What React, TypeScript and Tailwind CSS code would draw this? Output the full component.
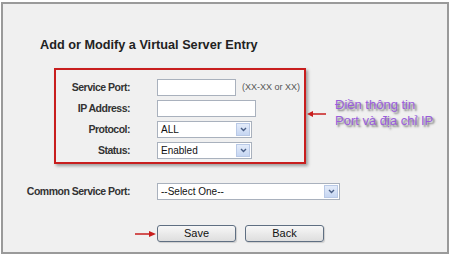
const Chevron = () => (
  <svg width="7" height="5" viewBox="0 0 7 5">
    <path d="M1 1 L3.5 3.5 L6 1" fill="none" stroke="#4a5f86" strokeWidth="1.4" />
  </svg>
)

const Select = ({ value, w }: { value: string; w: string }) => (
  <div className={`${w} h-[17px] flex items-stretch border border-[#a9b1bd] bg-white`}>
    <span className="flex-1 pl-[3px] text-[10px] leading-[15px] text-[#111]">{value}</span>
    <span className="w-[14px] m-[1px] flex items-center justify-center bg-gradient-to-b from-[#e4ecfa] to-[#c6d6f2] border border-[#b9c9e6]">
      <Chevron />
    </span>
  </div>
)

const Input = ({ w }: { w: string }) => (
  <div className={`${w} h-[17px] border border-[#a9b1bd] bg-white`} />
)

const Label = ({ children }: { children: string }) => (
  <span className="w-[74px] text-right text-[10.5px] tracking-[-0.5px] font-bold text-[#333]">{children}</span>
)

const Btn = ({ children }: { children: string }) => (
  <button className="w-[79px] h-[17px] rounded-[3px] border border-[#5f6f82] bg-gradient-to-b from-[#f7f7f7] to-[#dedede] text-[11px] leading-[15px] text-[#111] shadow-[1px_1px_1px_rgba(0,0,0,0.15)]">
    {children}
  </button>
)

const App = () => {
  return (
    <div className="w-[450px] h-[256px] bg-white pt-[2px] pl-[1px]" style={{ fontFamily: '"Liberation Sans", Arial, sans-serif' }}>
      <div className="w-[448px] h-[252px] border-2 border-[#9a9a9a] bg-[#f0f0f0] flex flex-col">
        <h2 className="mt-[33px] pl-[37px] text-[12.7px] leading-[16px] font-bold text-[#222]">Add or Modify a Virtual Server Entry</h2>

        <div className="mt-[15px] flex items-start">
          <div className="ml-[51px] w-[252px] h-[96px] border-2 border-[#c81e1e] shadow-[2px_2px_3px_rgba(0,0,0,0.35)] pt-[9px] flex flex-col gap-[4px]">
            <div className="flex items-center gap-[27px] h-[17px]">
              <Label>Service Port:</Label>
              <div className="flex items-center gap-[6px]">
                <Input w="w-[79px]" />
                <span className="text-[9px] text-[#555]">(XX-XX or XX)</span>
              </div>
            </div>
            <div className="flex items-center gap-[27px] h-[17px]">
              <Label>IP Address:</Label>
              <Input w="w-[99px]" />
            </div>
            <div className="flex items-center gap-[27px] h-[17px]">
              <Label>Protocol:</Label>
              <Select value="ALL" w="w-[95px]" />
            </div>
            <div className="flex items-center gap-[27px] h-[17px]">
              <Label>Status:</Label>
              <Select value="Enabled" w="w-[95px]" />
            </div>
          </div>

          <svg className="mt-[41px]" width="22" height="10" viewBox="0 0 22 10">
            <line x1="5" y1="5" x2="20" y2="5" stroke="#c81e1e" strokeWidth="1.5" />
            <path d="M1 5 L7 2 L7 8 Z" fill="#c81e1e" />
          </svg>

          <div className="ml-[7px] mt-[29px] text-[13px] leading-[16px] text-[#9a5ddb] [text-shadow:2px_2px_2px_rgba(50,50,50,0.7)]">
            <div>Điền thông tin</div>
            <div>Port và địa chỉ IP</div>
          </div>
        </div>

        <div className="mt-[19px] flex items-center gap-[27px] h-[17px]">
          <span className="w-[127px] text-right text-[10.5px] tracking-[-0.5px] font-bold text-[#333]">Common Service Port:</span>
          <Select value="--Select One--" w="w-[183px]" />
        </div>

        <div className="mt-[25px] flex items-center">
          <svg className="ml-[130px]" width="24" height="8" viewBox="0 0 24 8">
            <line x1="2" y1="4" x2="18" y2="4" stroke="#c81e1e" strokeWidth="1.5" />
            <path d="M23 4 L16 1 L16 7 Z" fill="#c81e1e" />
          </svg>
          <Btn>Save</Btn>
          <div className="w-[9px]" />
          <Btn>Back</Btn>
        </div>
      </div>
    </div>
  )
}

export default App
